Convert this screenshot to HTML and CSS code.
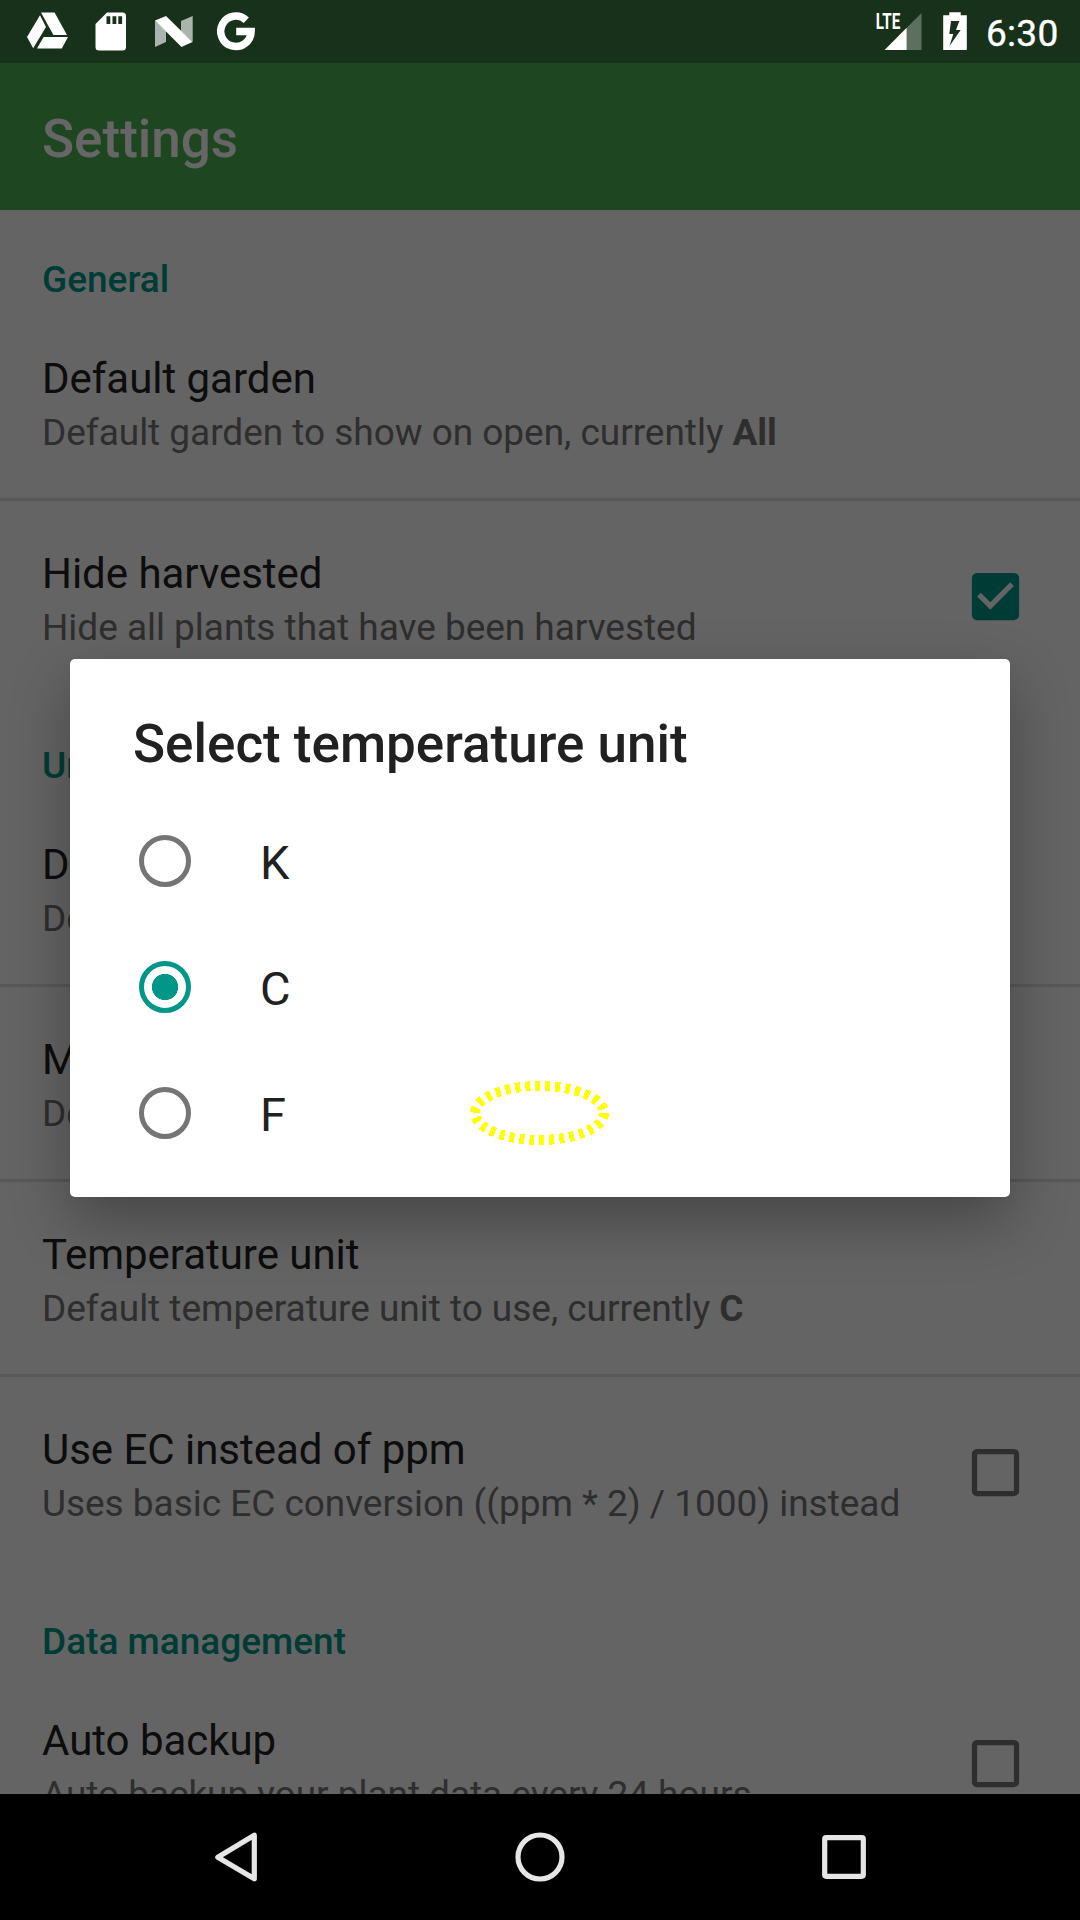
FILE: index.html
```html
<!DOCTYPE html>
<html lang="en">
<head>
<meta charset="utf-8">
<title>Settings</title>
<link rel="stylesheet" href="styles.css">
</head>
<body>
<div class="screen">
  <header class="status">
    <div class="status-side">
      <svg class="status-icon" width="42" height="63" viewBox="27 0 42 63"><path d="M40 15.2 46 27 33.2 48.2 27 37zM41 12.6H54.6L67 35H53.4zM43.6 37H68L61.8 48.4H37z"/></svg>
      <svg class="status-icon" width="31" height="63" viewBox="95 0 31 63"><path fill-rule="evenodd" d="M107 12.5H122.500Q126 12.500 126 16V47Q126 50.500 122.500 50.500H99Q95.500 50.500 95.500 47V24zM106.500 16.300V24H110.300V16.300zM112.500 16.300V24H116.300V16.300zM118.300 16.300V24H122.100V16.300z"/></svg>
      <svg class="status-icon" width="41" height="63" viewBox="152 0 41 63"><path opacity=".64" d="M155 20.500 166 31V42L155 47zM181 21 192.700 16V42L181 31z"/><path d="M155 20.500 166 16 192.500 42 181.500 47z"/></svg>
      <svg class="status-icon" width="39" height="63" viewBox="219 0 39 63"><path fill="none" stroke="#fff" stroke-width="7.500" d="M246.300 20.200A15.200 15.200 0 1 0 251.100 31.600H236.200"/></svg>
    </div>
    <div class="status-side">
      <svg class="status-icon" width="47" height="63" viewBox="876 0 47 63"><text class="network" x="875.800" y="29" textLength="24.500" lengthAdjust="spacingAndGlyphs">LTE</text><path d="M884.500 50 906.700 27.800V50z"/><path opacity=".3" d="M906.700 27.800 921.500 13V50H906.700z"/></svg>
      <svg class="status-icon" width="24" height="63" viewBox="943 0 24 63"><path fill-rule="evenodd" d="M949.300 12.300H960.700V15.300H966.800V50H943.200V15.300H949.300zM951 21 949.300 34H953.300L949.500 46 960.700 30H956L959.300 21z"/></svg>
      <span class="clock">6:30</span>
    </div>
  </header>
  <h1 class="appbar">Settings</h1>
  <main class="list">
    <h2 class="category">General</h2>
    <div class="row"><div><div class="title">Default garden</div><div class="summary">Default garden to show on open, currently <b>All</b></div></div></div>
    <div class="row ruled"><div><div class="title">Hide harvested</div><div class="summary">Hide all plants that have been harvested</div></div>
      <svg class="check on" viewBox="0 0 24 24"><path d="M19 3H5c-1.110 0-2 .9-2 2v14c0 1.100.89 2 2 2h14c1.110 0 2-.9 2-2V5c0-1.100-.89-2-2-2zm-9 14l-5-5 1.410-1.410L10 14.170l7.590-7.590L19 8l-9 9z"/></svg></div>
    <h2 class="category spaced">Units</h2>
    <div class="row"><div><div class="title">Delivery unit</div><div class="summary">Default delivery unit to use, currently <b>ml</b></div></div></div>
    <div class="row ruled"><div><div class="title">Measurement unit</div><div class="summary">Default measurement unit to use</div></div></div>
    <div class="row ruled"><div><div class="title">Temperature unit</div><div class="summary">Default temperature unit to use, currently <b>C</b></div></div></div>
    <div class="row ruled"><div><div class="title">Use EC instead of ppm</div><div class="summary">Uses basic EC conversion ((ppm * 2) / 1000) instead</div></div>
      <svg class="check" viewBox="0 0 24 24"><path d="M19 5v14H5V5h14m0-2H5c-1.100 0-2 .9-2 2v14c0 1.100.9 2 2 2h14c1.100 0 2-.9 2-2V5c0-1.100-.9-2-2-2z"/></svg></div>
    <h2 class="category spaced">Data management</h2>
    <div class="row"><div><div class="title">Auto backup</div><div class="summary">Auto backup your plant data every 24 hours</div></div>
      <svg class="check" viewBox="0 0 24 24"><path d="M19 5v14H5V5h14m0-2H5c-1.100 0-2 .9-2 2v14c0 1.100.9 2 2 2h14c1.100 0 2-.9 2-2V5c0-1.100-.9-2-2-2z"/></svg></div>
  </main>
  <nav class="navbar">
    <svg width="60" height="126" viewBox="206 1794 60 126"><path d="M254.300 1835.200V1878.800L217.800 1857.200z" stroke-linejoin="round"/></svg>
    <svg width="60" height="126" viewBox="510 1794 60 126"><circle cx="540" cy="1857" r="22"/></svg>
    <svg width="60" height="126" viewBox="814 1794 60 126"><rect x="824.700" y="1837.700" width="38.600" height="38.600" rx="1.500"/></svg>
  </nav>
  <div class="scrim"></div>
  <section class="dialog">
    <h2 class="dialog-title">Select temperature unit</h2>
    <div class="option"><span class="radio"></span><span class="option-label">K</span></div>
    <div class="option"><span class="radio selected"></span><span class="option-label">C</span></div>
    <div class="option"><span class="radio"></span><span class="option-label">F</span>
      <svg class="marker" width="140" height="66" viewBox="470 1080 140 66"><ellipse cx="539.500" cy="1113" rx="64.500" ry="27"/></svg></div>
  </section>
</div>
</body>
</html>
```
FILE: styles.css
```css
* { box-sizing: border-box; }
body { margin: 0; font-family: Roboto, sans-serif; }
h1, h2 { margin: 0; font-weight: 500; }
.screen { position: relative; width: 1080px; height: 1920px; overflow: hidden; display: flex; flex-direction: column; background: #fafafa; }
.status { height: 63px; flex: none; display: flex; justify-content: space-between; padding: 0 21px 0 27px; background: #18311a; position: relative; z-index: 2; color: #fff; }
.status-side { display: flex; align-items: center; }
.status-side:first-child { gap: 26px; }
.status-side:last-child { gap: 20px; }
.status-icon { fill: #fff; display: block; overflow: visible; }
.network { font: bold 21.500px Roboto, sans-serif; }
.clock { width: 73px; margin-left: -1px; font-size: 37px; font-weight: 400; letter-spacing: .3px; -webkit-text-stroke: .4px #fff; line-height: 43px; padding-top: 3px; white-space: nowrap; }
.appbar { height: 147px; flex: none; padding: 0 42px; font-size: 53px; line-height: 153px; color: #fff; background: #4caf50; }
.list { flex: 1; min-height: 0; overflow: hidden; }
.category { height: 96px; padding: 48px 42px 0; font-size: 37px; line-height: 43px; color: #009688; }
.category.spaced { height: 99px; padding-top: 51px; }
.row { height: 192px; padding: 48px 52.700px 0 42px; display: flex; justify-content: space-between; white-space: nowrap; }
.row.ruled { height: 195px; border-top: 3px solid #dcdcdc; }
.title { font-size: 42px; line-height: 49px; color: #212121; letter-spacing: -.03px; }
.summary { margin-top: 8px; font-size: 37px; line-height: 43px; letter-spacing: -.03px; color: #737373; }
.check { width: 63px; height: 63px; flex: none; margin-top: 16.300px; fill: #737373; }
.check.on { fill: #009688; }
.navbar { height: 126px; flex: none; display: flex; justify-content: center; gap: 244px; background: #000; position: relative; z-index: 2; }
.navbar svg { fill: none; stroke: #e6e6e6; stroke-width: 5.200; }
.scrim { position: absolute; inset: 0; background: rgba(0, 0, 0, .6); }
.dialog { position: absolute; left: 70px; top: 659px; width: 940px; height: 538px; border-radius: 5px; background: #fff; box-shadow: 0 24px 60px rgba(0, 0, 0, .3); padding: 54px 63px 0; color: #212121; }
.dialog-title { font-size: 53px; line-height: 62px; margin-bottom: 23px; }
.option { height: 126px; display: flex; align-items: center; font-size: 47px; gap: 69px; padding-left: 6px; position: relative; line-height: 56px; }
.option-label { padding-top: 4px; }
.radio { width: 52px; height: 52px; border: 5px solid #757575; border-radius: 50%; flex: none; }
.radio.selected { border-color: #009688; background: radial-gradient(circle, #009688 12.800px, transparent 13.400px); }
.marker { position: absolute; left: 337px; top: 30px; fill: none; stroke: #ff0; stroke-width: 10; stroke-dasharray: 5 5; shape-rendering: crispEdges; }
```
